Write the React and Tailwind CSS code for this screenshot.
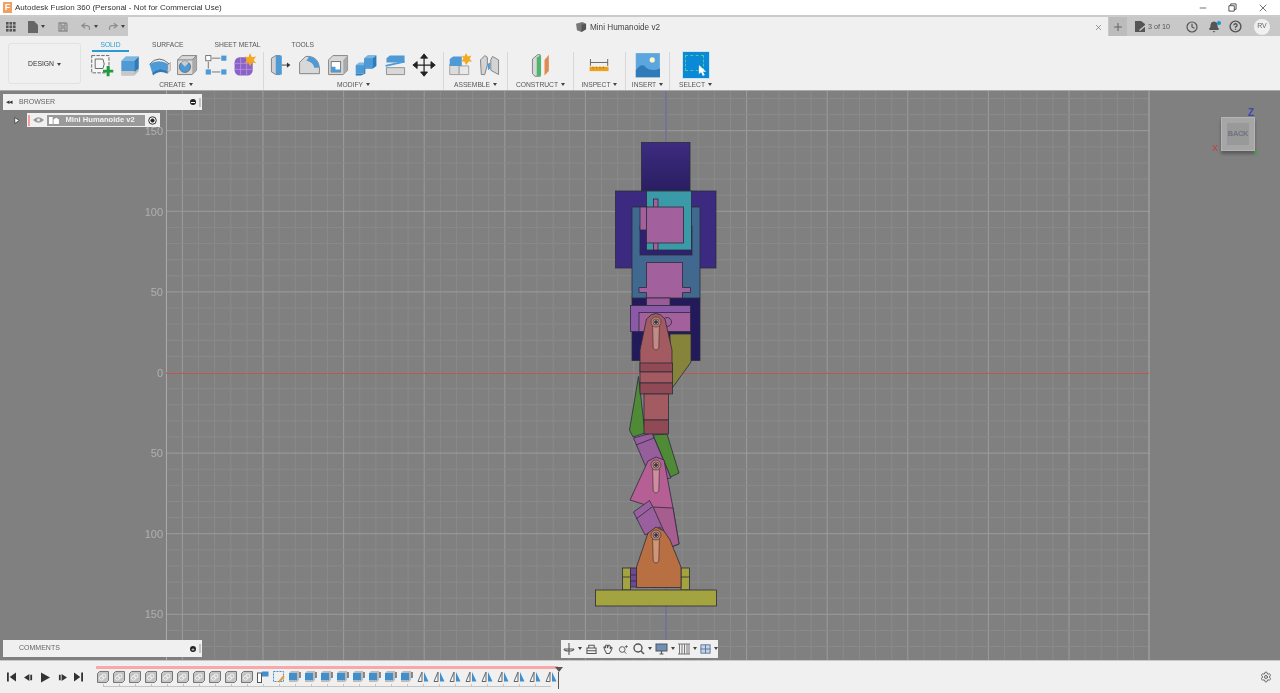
import React from "react";
import { Minus, X, Plus, Clock, Bell, HelpCircle, Settings } from "lucide-react";

const centerX = 666;
const centerY = 372.5;
const step = 16.12;

// grid lines, every fifth one is a major line
const steps = Array.from({ length: 71 }, (_, i) => i - 35);

function Caret() {
  return <span className="inline-block ml-[3px] mb-[1px] border-x-[2.5px] border-t-[3px] border-x-transparent border-t-[#444]" />;
}

function Horn({ x, y }) {
  return (
    <g stroke="#4b3030" strokeWidth="0.7">
      <path d={`M${x - 3.5} ${y} L${x - 2.8} ${y + 26} Q${x} ${y + 30} ${x + 2.8} ${y + 26} L${x + 3.5} ${y}Z`} fill="#ecc8b8" fillOpacity="0.45" />
      <circle cx={x} cy={y} r="5" fill="#b58a80" />
      <circle cx={x} cy={y} r="3" fill="#b9a0a0" />
      <circle cx={x} cy={y} r="1.5" fill="#3a3050" />
    </g>
  );
}

function Robot() {
  const line = { stroke: "#2b2b3a", strokeWidth: 0.8 };
  return (
    <g {...line}>
      {/* head and arms */}
      <rect x="641.5" y="142.5" width="48.5" height="48" fill="url(#head)" />
      <rect x="615.5" y="191" width="100.5" height="77" fill="#3b2a80" />
      {/* hips */}
      <rect x="632" y="298" width="68" height="62.5" fill="#231a5c" />
      {/* torso */}
      <rect x="632" y="207" width="68" height="91" fill="#41688f" />
      <rect x="640" y="226" width="52" height="29" fill="#2d2170" />
      <rect x="646.5" y="191" width="45" height="59" fill="#3b9aa8" />
      <rect x="640" y="207" width="7" height="23" fill="#a2609c" />
      <rect x="653.5" y="199" width="4.5" height="51" fill="#a2609c" />
      <rect x="646.5" y="207" width="37" height="36" fill="#a2609c" />
      <path d="M646.5 262.5H682.5V287.5H690.5V292.5H682.5V298H646.5V292.5H639V287.5H646.5Z" fill="#a2609c" />
      <rect x="646.5" y="298" width="23.5" height="8" fill="#9a5c98" />
      <rect x="630.5" y="305.5" width="60" height="26" fill="#8a5aa8" />
      <rect x="639" y="312.5" width="51.5" height="19" fill="#a2609c" />
      <circle cx="667" cy="322" r="4.5" fill="none" />
      {/* right thigh and left shin */}
      <path d="M670 334H691V362L673 387H670Z" fill="#86843a" />
      <path d="M638.5 376.5L645 433L633 437L629.5 430Z" fill="#4f8a36" />
      <path d="M653 435L667 434L679 473L670.5 477Z" fill="#4f8a36" />
      {/* knee link */}
      <path d="M633.5 438L652 433L671 478L661 480L648 472Z" fill="#965f9c" />
      <path d="M636 445L654 438" fill="none" />
      {/* thigh */}
      <path d="M640 372V350L646.5 319Q656 308 665 319L672 350V372Z" fill="#a35a60" />
      <rect x="640" y="363" width="32.5" height="9" fill="#8f4a55" />
      <rect x="640" y="372" width="32.5" height="11" fill="#a35a60" />
      <rect x="640" y="383" width="32.5" height="11" fill="#8f4a55" />
      <rect x="644" y="394" width="24.5" height="26" fill="#a35a60" />
      <rect x="644" y="420" width="24.5" height="14" fill="#8f4a55" />
      {/* lower leg */}
      <path d="M630 500L648 461L656 457L664 460L673 508L679 544L671 547L652 507Z" fill="#b55f94" />
      <path d="M652 507L673 508L679 544L671 547Z" fill="#a85d90" />
      <path d="M633.5 512L649.5 500.5L654 509L671 547L660 527L645 535Z" fill="#9a5f9e" />
      <path d="M636 519L652 507" fill="none" />
      {/* foot */}
      <rect x="630.5" y="568" width="6.5" height="19" fill="#6d4a90" />
      <rect x="622.5" y="568" width="8" height="22" fill="#a3a340" />
      <rect x="681" y="568" width="8.5" height="22" fill="#a3a340" />
      <path d="M622.5 577H630.5M681 577H689.5M630.5 575H637M630.5 581H637" fill="none" />
      <path d="M636.5 567L648 533L656 527L664 531L670 540L681 567V587.5H636.5Z" fill="#b86f42" />
      <rect x="595.5" y="590" width="121" height="16" fill="#a3a340" />
      <Horn x={656} y={322} />
      <Horn x={656} y={465} />
      <Horn x={656} y={535} />
    </g>
  );
}

function Viewport() {
  const labels = [
    ["150", 131],
    ["100", 212],
    ["50", 292],
    ["0", 373],
    ["50", 453],
    ["100", 534],
    ["150", 614],
  ];
  return (
    <svg viewBox="0 91 1280 569" className="block w-full h-full">
      <defs>
        <linearGradient id="head" x1="0" y1="0" x2="0" y2="1">
          <stop offset="0" stopColor="#3d2c80" />
          <stop offset="1" stopColor="#2a1e62" />
        </linearGradient>
      </defs>
      {steps.map((k) => {
        const x = centerX + k * step;
        if (x < 166 || x > 1149) return null;
        return <line key={"v" + k} x1={x} x2={x} y1="91" y2="660" stroke={k % 5 === 0 ? "#9c9c9c" : "#8a8a8a"} strokeWidth="1" />;
      })}
      {steps.map((k) => {
        const y = centerY + k * step;
        if (y < 91 || y > 660) return null;
        return <line key={"h" + k} x1="166" x2="1149" y1={y} y2={y} stroke={k % 5 === 0 ? "#9c9c9c" : "#8a8a8a"} strokeWidth="1" />;
      })}
      <line x1="166.5" x2="166.5" y1="91" y2="660" stroke="#aaaaaa" />
      <line x1="1149" x2="1149" y1="91" y2="660" stroke="#aaaaaa" />
      <line x1="166" x2="1149" y1={centerY + 0.5} y2={centerY + 0.5} stroke="#b04a4a" />
      <line x1={centerX} x2={centerX} y1="91" y2="660" stroke="#5a5a9c" />
      {labels.map(([t, y]) => (
        <text key={y} x="163" y={y + 4} textAnchor="end" fontSize="11" fill="#b0b0b0" fontFamily="Liberation Sans, sans-serif">
          {t}
        </text>
      ))}
      <Robot />
    </svg>
  );
}

// ribbon icons, 28x28 box
const ribbonIcons = {
  sketch: (
    <g>
      <rect x="2" y="3" width="20" height="20" fill="#f7f7f7" stroke="#555" strokeDasharray="4 1.5" />
      <path d="M6 7H15Q18 13 15 18H6Z" fill="none" stroke="#555" />
      <path d="M21 15V27M15 21H27" stroke="#1f9d3e" strokeWidth="3.4" />
    </g>
  ),
  extrude: (
    <g>
      <path d="M4 9L9 4H24V21L19 26H4Z" fill="#bbb" />
      <path d="M4 9H19V21H4Z" fill="#4e9ad6" />
      <path d="M19 9L24 4V18L19 22Z" fill="#2f7ab8" />
      <path d="M9 4H24L19 9H4Z" fill="#7ab8e4" />
      <path d="M4 21H19V26H4Z" fill="#c8c8c8" />
    </g>
  ),
  revolve: (
    <g>
      <path d="M3 13Q14 1 26 13" fill="none" stroke="#555" />
      <path d="M3 13Q14 6 25 13L24 21Q14 15 6 23Z" fill="#4e9ad6" />
      <path d="M6 23Q14 15 24 21V24Q14 19 7 26Z" fill="#2f7ab8" />
      <path d="M24 14L27 11V20L24 23Z" fill="#ddd" stroke="#777" strokeWidth="0.6" />
    </g>
  ),
  hole: (
    <g>
      <path d="M3 8L8 3H25V20L20 25H3Z" fill="#d8d8d8" stroke="#777" />
      <path d="M20 8L25 3V20L20 25Z" fill="#aaa" />
      <path d="M3 8H20L25 3" fill="none" stroke="#777" />
      <circle cx="11.5" cy="16" r="6.5" fill="#4e9ad6" stroke="#666" />
      <path d="M11.5 16L7 11A6.5 6.5 0 0 1 16 11Z" fill="#ccc" />
    </g>
  ),
  pattern: (
    <g>
      <rect x="2" y="3" width="6" height="6" fill="#fff" stroke="#666" />
      <rect x="20" y="3" width="6" height="6" fill="#4e9ad6" />
      <rect x="2" y="19" width="6" height="6" fill="#4e9ad6" />
      <rect x="20" y="19" width="6" height="6" fill="#4e9ad6" />
      <path d="M9 6H19M5 10V18M9 22H19" stroke="#666" />
    </g>
  ),
  form: (
    <g>
      <rect x="3" y="5" width="21" height="21" rx="6" fill="#8a62c8" />
      <path d="M3 12H24M3 19H24M10 5V26M17 5V26" stroke="#b094dc" />
      <path d="M21 0L23 5L28 4L25 8L28 12L23 11L21 16L19 11L15 12L17 8L15 4L19 5Z" fill="#f5a81c" />
    </g>
  ),
  press: (
    <g>
      <path d="M4 6L9 3H14V25H9L4 22Z" fill="#d0d0d0" stroke="#777" />
      <path d="M9 3H16V25H9Z" fill="#4e9ad6" />
      <path d="M16 14H23" stroke="#333" />
      <path d="M22 11L26 14L22 17Z" fill="#333" />
    </g>
  ),
  fillet: (
    <g>
      <path d="M3 24V11L10 4H15Q25 6 26 17V24Z" fill="#d8d8d8" stroke="#777" />
      <path d="M14 4Q25 6 26 17L20 17Q19 11 11 9Z" fill="#4e9ad6" />
    </g>
  ),
  shell: (
    <g>
      <path d="M3 8L8 3H25V20L20 25H3Z" fill="#d8d8d8" stroke="#777" />
      <path d="M20 8L25 3V20L20 25Z" fill="#aaa" />
      <rect x="6" y="10" width="11" height="12" fill="#fff" stroke="#666" />
      <path d="M6 22V16H11V19H17V22Z" fill="#4e9ad6" />
    </g>
  ),
  combine: (
    <g>
      <path d="M2 14H13V24H2Z" fill="#4e9ad6" />
      <path d="M2 14L6 11H13L13 14Z" fill="#7ab8e4" />
      <path d="M12 6L16 3H26V15L22 18H13V24L8 26H2V24H12Z" fill="#2f7ab8" />
      <path d="M12 6H22V18H12Z" fill="#4e9ad6" />
      <path d="M12 6L16 3H26L22 6Z" fill="#7ab8e4" />
    </g>
  ),
  split: (
    <g>
      <path d="M4 6L8 3H25V11H4Z" fill="#4e9ad6" />
      <path d="M3 15L25 10" stroke="#4e9ad6" strokeWidth="2" />
      <path d="M4 17H25V25H4Z" fill="#d8d8d8" stroke="#888" />
    </g>
  ),
  move: (
    <g fill="#222" stroke="#222">
      <path d="M14 5V23M5 14H23" strokeWidth="1.4" />
      <path d="M14 1L18 6H10ZM14 27L18 22H10ZM1 14L6 10V18ZM27 14L22 10V18Z" />
    </g>
  ),
  component: (
    <g>
      <path d="M2 13H13V25H2Z" fill="#dcdcdc" stroke="#999" />
      <path d="M13 15H24V25H13Z" fill="#e8e8e8" stroke="#999" />
      <path d="M2 7L6 4H16V15H2Z" fill="#4e9ad6" />
      <path d="M21 0L23 4L27 3L25 7L28 10L24 10L21 14L19 10L15 10L18 7L16 3L19 4Z" fill="#f5a81c" />
    </g>
  ),
  joint: (
    <g fill="#d4d4d4" stroke="#777">
      <path d="M4 8L9 3L12 5V14L9 25H5Z" />
      <path d="M25 8L18 4L16 8V20L25 25Z" />
      <path d="M12 13L15 11V18L13 20Z" fill="#4e9ad6" stroke="none" />
    </g>
  ),
  plane: (
    <g>
      <path d="M4 7L10 2H13V27H7L4 24Z" fill="#d8d8d8" stroke="#777" />
      <path d="M9 5L14 3V26L9 27Z" fill="#4fb56d" />
      <path d="M18 8L23 2V21L18 26Z" fill="#e08a52" />
    </g>
  ),
  measure: (
    <g>
      <path d="M4 7V15M24 7V15M4 11H24" stroke="#555" />
      <rect x="3" y="16" width="22" height="5" fill="#eda11c" />
      <path d="M7 16V18M11 16V18M15 16V18M19 16V18" stroke="#a87000" />
    </g>
  ),
  insert: (
    <g>
      <rect x="1" y="0" width="28" height="28" fill="#5ba6de" stroke="#bcd" strokeWidth="0.5" />
      <path d="M1 28V20Q8 10 13 17Q19 22 29 18V28Z" fill="#2f7ab8" />
      <circle cx="20" cy="8" r="3" fill="#fff4c8" />
    </g>
  ),
};

function RibbonGroup({ label, width, icons, gap, last, pl, pr }) {
  return (
    <div className={`flex flex-col items-center shrink-0 h-full ${last ? "" : "border-r border-[#d8d8d8]"}`} style={{ width }}>
      <div className="flex items-center h-[30px]" style={{ gap, paddingLeft: pl, paddingRight: pr }}>
        {icons.map((name) => (
          <svg key={name} viewBox="0 0 29 29" className="w-[25px] h-[25px] shrink-0">
            {ribbonIcons[name]}
          </svg>
        ))}
      </div>
      <div className="text-[6.7px] leading-[10px] text-[#555] mt-[2px] whitespace-nowrap">
        {label}
        <Caret />
      </div>
    </div>
  );
}

function SelectButton() {
  return (
    <div className="relative w-[26px] h-[26px] bg-[#0a8ad6] outline outline-1 outline-[#cfe4f2]">
      <div className="absolute left-[2px] top-[3px] w-[19px] h-[16px] border border-dashed border-[#4fc59a]" />
      <svg viewBox="0 0 10 14" className="absolute left-[15px] top-[12px] w-[9px] h-[13px]">
        <path d="M1 1V11L3.5 9L5.5 13L7.5 12L5.5 8.5H9Z" fill="#fff" />
      </svg>
    </div>
  );
}

function TitleBar() {
  return (
    <div className="flex items-center h-[15px] bg-white shrink-0">
      <div className="ml-[3px] w-[9px] h-[11px] bg-[#f0a060] text-[9px] leading-[11px] font-bold text-white text-center">F</div>
      <span className="ml-[3px] text-[8px] text-[#333]">Autodesk Fusion 360 (Personal - Not for Commercial Use)</span>
      <div className="ml-auto flex items-center gap-[20px] pr-[11px] text-[#555]">
        <Minus size={10} />
        <svg viewBox="0 0 10 10" className="w-[9px] h-[9px]" fill="none" stroke="#444">
          <path d="M1 3H7V9H1ZM3 3V1H9V7H7" />
        </svg>
        <X size={12} strokeWidth={1.4} className="text-[#333]" />
      </div>
    </div>
  );
}

function TabStrip() {
  return (
    <div className="flex h-[21px] bg-[#c8c8c8] border-t-2 border-[#cbcbcb] shrink-0">
      <div className="w-[128px] flex items-center pl-[6px] text-[#666]">
        <svg viewBox="0 0 10 10" className="w-[10px] h-[10px]" fill="#555">
          {[0, 3.5, 7].map((x) => [0, 3.5, 7].map((y) => <rect key={`${x}-${y}`} x={x} y={y} width="2.6" height="2.6" />))}
        </svg>
        <div className="flex items-center ml-[12px]">
          <svg viewBox="0 0 10 12" className="w-[10px] h-[12px]" fill="#666">
            <path d="M0 0H6L10 4V12H0Z" />
          </svg>
          <Caret />
        </div>
        <svg viewBox="0 0 10 10" className="w-[10px] h-[10px] ml-[13px]" fill="none" stroke="#8c8c8c" strokeWidth="1.3">
          <path d="M1 1H8L9 2V9H1ZM3 1V4H7V1M3 9V6H7V9" />
        </svg>
        <div className="flex items-center ml-[13px]">
          <svg viewBox="0 0 12 10" className="w-[10px] h-[9px]" fill="none" stroke="#8c8c8c" strokeWidth="1.4">
            <path d="M5 1L1 4L5 7M1 4H8Q11 5 10 9" />
          </svg>
          <Caret />
        </div>
        <div className="flex items-center ml-[10px]">
          <svg viewBox="0 0 12 10" className="w-[10px] h-[9px]" fill="none" stroke="#8c8c8c" strokeWidth="1.4">
            <path d="M7 1L11 4L7 7M11 4H4Q1 5 2 9" />
          </svg>
          <Caret />
        </div>
      </div>
      <div className="flex-1 relative flex items-center justify-center bg-[#f0f0f0]">
        <svg viewBox="0 0 12 11" className="w-[11px] h-[10px] mr-[3px]">
          <path d="M0 2L7 0L11 2V8L6 11L1 9Z" fill="#777" />
          <path d="M6 3L11 2V8L6 11Z" fill="#555" />
        </svg>
        <span className="mt-[3px] text-[8.2px] text-[#444]">Mini Humanoide v2</span>
        <X size={9} strokeWidth={1.5} className="absolute right-[5px] top-[6px] text-[#555]" />
      </div>
      <div className="w-[172px] flex items-center text-[#555]">
        <div className="ml-[1px] w-[18px] h-full flex items-center justify-center bg-[#bcbcbc]">
          <Plus size={12} strokeWidth={2.2} className="text-[#666]" />
        </div>
        <svg viewBox="0 0 11 11" className="ml-[8px] w-[11px] h-[11px]" fill="#555">
          <path d="M0 0H6L10 3V11H0Z" />
          <path d="M4 9L10 4L11 5L5 10Z" fill="#c8c8c8" />
        </svg>
        <span className="ml-[2px] mt-[1px] w-[22px] text-[7.2px] whitespace-nowrap text-[#555]">3 of 10</span>
        <Clock size={12} strokeWidth={2.4} className="ml-[16px]" />
        <div className="relative ml-[10px]">
          <Bell size={12} fill="#555" />
          <span className="absolute right-[-1px] top-0 w-[4px] h-[4px] rounded-full bg-[#0a96e0]" />
        </div>
        <HelpCircle size={13} strokeWidth={2.6} className="ml-[9px]" />
        <div className="ml-[12px] w-[16px] h-[16px] rounded-full bg-[#f0f0f0] flex items-center justify-center text-[7px] text-[#666]">RV</div>
      </div>
    </div>
  );
}

function Ribbon() {
  return (
    <div className="flex h-[55px] bg-[#f0f0f0] border-b border-[#a8a8a8] shrink-0 pl-[8px]">
      <div className="w-[73px] h-[41px] mt-[7px] pt-[2px] border border-[#e2e2e2] rounded-[3px] flex items-center justify-center text-[6.8px] text-[#333] shrink-0">
        DESIGN
        <Caret />
      </div>
      <div className="flex flex-col ml-[8px]">
        <div className="flex h-[16px] pt-[1px] text-[6.7px] leading-[15px] text-[#555] box-content">
          <div className="w-[37px] h-[15px] ml-[3px] text-center text-[#2a9ad6] border-b-2 border-[#2a9ad6]">SOLID</div>
          <div className="ml-[23px]">SURFACE</div>
          <div className="ml-[31px]">SHEET METAL</div>
          <div className="ml-[31px]">TOOLS</div>
        </div>
        <div className="flex h-[38px]">
          <RibbonGroup label="CREATE" width={175} gap={3.5} pr={5} icons={["sketch", "extrude", "revolve", "hole", "pattern", "form"]} />
          <RibbonGroup label="MODIFY" width={180} gap={3.7} pr={2} icons={["press", "fillet", "shell", "combine", "split", "move"]} />
          <RibbonGroup label="ASSEMBLE" width={64} gap={4} pr={2} icons={["component", "joint"]} />
          <RibbonGroup label="CONSTRUCT" width={66} pl={2} icons={["plane"]} />
          <RibbonGroup label="INSPECT" width={52} icons={["measure"]} />
          <RibbonGroup label="INSERT" width={44} icons={["insert"]} />
          <div className="flex flex-col items-center w-[51px] shrink-0">
            <div className="h-[30px] flex items-center">
              <SelectButton />
            </div>
            <div className="text-[6.7px] leading-[10px] text-[#555] mt-[2px]">
              SELECT
              <Caret />
            </div>
          </div>
        </div>
      </div>
    </div>
  );
}

function PanelEnd() {
  return (
    <div className="ml-auto flex items-center gap-[3px] pr-[1px]">
      <span className="w-[6px] h-[6px] rounded-full bg-[#222] flex items-center justify-center">
        <span className="w-[4px] h-[1px] bg-white" />
      </span>
      <span className="w-[2px] h-[9px] bg-[#c4c4c4]" />
    </div>
  );
}

function BrowserPanel() {
  return (
    <div className="absolute left-[3px] top-[3px] w-[199px]">
      <div className="flex items-center h-[16px] bg-[#f0f0f0] pl-[3px]">
        <span className="text-[7px] text-[#333] tracking-[-1px]">◂◂</span>
        <span className="ml-[7px] text-[7px] text-[#666]">BROWSER</span>
        <PanelEnd />
      </div>
      <div className="flex items-center mt-[3px] h-[14px]">
        <svg viewBox="0 0 8 10" className="ml-[11px] w-[6px] h-[9px]">
          <path d="M1 1L7 5L1 9Z" fill="#fff" stroke="#333" />
        </svg>
        <div className="ml-[7px] w-[133px] h-[14px] flex items-center bg-[#f0f0f0]">
          <span className="ml-[1px] w-[1.5px] h-[11px] bg-[#f4a0a0]" />
          <svg viewBox="0 0 12 8" className="ml-[3px] w-[11px] h-[8px]" fill="#999">
            <path d="M0 4Q6 -2 12 4Q6 10 0 4Z" />
            <circle cx="6" cy="4" r="1.6" fill="#eee" />
          </svg>
          <div className="ml-[3px] flex-1 h-[11px] flex items-center bg-[#9a9a9a] pl-[2px]">
            <svg viewBox="0 0 11 10" className="w-[10px] h-[9px]" fill="#fff">
              <path d="M0 1H4V9H0ZM5 4L8 2L11 4V9H5Z" />
            </svg>
            <span className="ml-[7px] text-[7.6px] font-bold text-[#f4f4f4] whitespace-nowrap">Mini Humanoide v2</span>
          </div>
          <svg viewBox="0 0 10 10" className="mx-[3px] w-[9px] h-[9px]" fill="none" stroke="#222">
            <circle cx="5" cy="5" r="4.2" />
            <circle cx="5" cy="5" r="1.8" fill="#222" />
          </svg>
        </div>
      </div>
    </div>
  );
}

function CommentsPanel() {
  return (
    <div className="absolute left-[3px] bottom-[3px] w-[199px] h-[17px] flex items-center bg-[#f0f0f0] pl-[16px]">
      <span className="text-[7px] text-[#666]">COMMENTS</span>
      <div className="ml-auto flex items-center gap-[3px] pr-[1px]">
        <span className="w-[6px] h-[6px] rounded-full bg-[#222] flex items-center justify-center text-white text-[6px] leading-[6px]">+</span>
        <span className="w-[2px] h-[9px] bg-[#c4c4c4]" />
      </div>
    </div>
  );
}

function NavBar() {
  const stroke = { fill: "none", stroke: "#555", strokeWidth: 1.1 };
  return (
    <div className="absolute left-[561px] bottom-[2px] w-[157px] h-[18px] flex items-center gap-[3px] pl-[2px] bg-[#f0f0f0]">
      <div className="flex items-center">
        <svg viewBox="0 0 12 12" className="w-[12px] h-[12px]" {...stroke}>
          <path d="M6 0V12M1 6H11M1 6A5 2 0 0 0 11 6" />
        </svg>
        <Caret />
      </div>
      <svg viewBox="0 0 12 12" className="w-[12px] h-[12px] ml-[1px]" {...stroke}>
        <path d="M1 5H11V11H1ZM1 8H11M3 5V2H9V5" />
      </svg>
      <svg viewBox="0 0 12 12" className="w-[12px] h-[12px] ml-[2px]" {...stroke}>
        <path d="M3 7L2 4Q3 3 4 5L4 2Q5 1 6 2V5L7 2Q8 1 9 3V6L10 4Q12 4 10 8L8 11H5Z" />
      </svg>
      <svg viewBox="0 0 12 12" className="w-[11px] h-[11px] ml-[2px]" {...stroke}>
        <circle cx="5" cy="6" r="3.4" />
        <path d="M7.5 8.5L10 11M10 1V4M8.5 2.5H11.5" />
      </svg>
      <div className="flex items-center ml-[2px]">
        <svg viewBox="0 0 12 12" className="w-[12px] h-[12px]" {...stroke} strokeWidth={1.4}>
          <circle cx="5" cy="5" r="4" />
          <path d="M8 8L11 11" />
        </svg>
        <Caret />
      </div>
      <div className="flex items-center">
        <svg viewBox="0 0 12 12" className="w-[13px] h-[12px]">
          <rect x="0.5" y="1" width="11" height="7" fill="#6d8fb8" stroke="#555" />
          <path d="M4 11H8M6 8V11" stroke="#555" strokeWidth="1.2" />
        </svg>
        <Caret />
      </div>
      <div className="flex items-center">
        <svg viewBox="0 0 12 12" className="w-[12px] h-[12px]" fill="none" stroke="#777">
          <path d="M1.5 1V11M4 1V11M6.5 1V11M9 1V11M11 1V11M0 1H12M0 11H12" />
        </svg>
        <Caret />
      </div>
      <div className="flex items-center">
        <svg viewBox="0 0 12 12" className="w-[11px] h-[10px]">
          <rect x="0.5" y="1" width="11" height="10" fill="#c8d4e4" stroke="#4a6a96" />
          <path d="M6 1V11M0 6H12" stroke="#4a6a96" />
        </svg>
        <Caret />
      </div>
    </div>
  );
}

function ViewCube() {
  return (
    <div className="absolute left-[1212px] top-[16px] w-[50px] h-[50px]">
      <div className="absolute left-[9px] top-[10px] w-[34px] h-[34px] bg-[#a6a6a6] border border-[#b4b4b4] flex items-center justify-center shadow-[0_3px_3px_#5c5c5c]">
        <div className="w-[22px] h-[22px] bg-[#999] flex items-center justify-center text-[7.5px] font-bold tracking-[-0.3px] text-[#6f7280]">BACK</div>
      </div>
      <span className="absolute left-[36px] top-[-2px] text-[10px] font-bold text-[#3f46b0]">Z</span>
      <span className="absolute left-[0px] top-[35px] text-[9px] text-[#c23c3c]">X</span>
      <span className="absolute left-[42px] top-[41px] text-[8px] font-bold text-[#3aa845]">Y</span>
    </div>
  );
}

function TimelineIcon({ kind }) {
  if (kind === "chain") {
    return (
      <svg viewBox="0 0 12 12" className="w-[12px] h-[12px] shrink-0">
        <path d="M0.5 2.5L2.5 0.5H11.5V9.5L9.5 11.5H0.5Z" fill="#c4c4c4" stroke="#777" />
        <circle cx="4.5" cy="7" r="2" fill="none" stroke="#f4f4f4" />
        <circle cx="7" cy="5" r="2" fill="none" stroke="#f4f4f4" />
      </svg>
    );
  }
  if (kind === "form") {
    return (
      <svg viewBox="0 0 12 12" className="w-[12px] h-[12px] shrink-0">
        <rect x="0.5" y="2" width="4" height="9.5" fill="#fff" stroke="#555" />
        <rect x="5" y="0.5" width="6.5" height="5" fill="#3f8fd0" />
      </svg>
    );
  }
  if (kind === "sketch") {
    return (
      <svg viewBox="0 0 12 12" className="w-[12px] h-[12px] shrink-0">
        <rect x="0.5" y="0.5" width="10" height="10" fill="none" stroke="#3f8fd0" strokeDasharray="2 1" />
        <path d="M6 11L11 5" stroke="#e89a3c" strokeWidth="2" />
      </svg>
    );
  }
  if (kind === "box") {
    return (
      <svg viewBox="0 0 12 12" className="w-[12px] h-[12px] shrink-0">
        <path d="M0 2L2 0H10V9L8 11H0Z" fill="#bbb" />
        <path d="M0 2H8V9H0Z" fill="#3f8fd0" />
        <path d="M10 1H12V7H10Z" fill="#888" />
      </svg>
    );
  }
  return (
    <svg viewBox="0 0 12 12" className="w-[12px] h-[12px] shrink-0">
      <path d="M5 1L1 10.5H5Z" fill="#f4f4f4" stroke="#666" />
      <path d="M7 1L11.5 10.5H7Z" fill="#3f8fd0" />
    </svg>
  );
}

function Timeline() {
  const items = [
    ...Array(10).fill("chain"),
    "form",
    "sketch",
    ...Array(8).fill("box"),
    ...Array(9).fill("tri"),
  ];
  return (
    <div className="relative flex items-center h-[33px] border-t border-[#c8c8c8] bg-[#f0f0f0] shrink-0">
      <div className="flex items-center gap-[7.5px] ml-[7px] w-[89px] shrink-0">
        <svg viewBox="0 0 10 10" className="w-[9px] h-[10px]" fill="#333"><path d="M0 0H2V10H0ZM10 0V10L3 5Z" /></svg>
        <svg viewBox="0 0 10 10" className="w-[9px] h-[9px]" fill="#333"><path d="M6 1V9L0 5ZM7 2H9V8H7Z" /></svg>
        <svg viewBox="0 0 10 10" className="w-[10px] h-[11px]" fill="#333"><path d="M1 0L10 5L1 10Z" /></svg>
        <svg viewBox="0 0 10 10" className="w-[9px] h-[9px]" fill="#333"><path d="M4 1V9L10 5ZM1 2H3V8H1Z" /></svg>
        <svg viewBox="0 0 10 10" className="w-[9px] h-[10px]" fill="#333"><path d="M10 0H8V10H10ZM0 0V10L7 5Z" /></svg>
      </div>
      <div className="flex flex-col -mt-[2px]">
        <div className="w-[462px] h-[3px] bg-[#f7a9a9] mb-[2px]" />
        <div className="flex gap-[4px] ml-[1px]">
          {items.map((kind, i) => (
            <TimelineIcon key={i} kind={kind} />
          ))}
        </div>
        {/* small ticks under the features */}
        <div className="flex gap-[15px] ml-[7px] mt-[1px] w-[448px] h-[3px] border-b border-[#c4c4c4]">
          {items.slice(0, 28).map((_, i) => (
            <span key={i} className="w-[1px] h-[3px] bg-[#c4c4c4] shrink-0" />
          ))}
        </div>
      </div>
      <div className="absolute left-[554px] top-[6px] flex flex-col items-center w-[9px]">
        <div className="w-0 h-0 border-x-[4px] border-t-[5px] border-x-transparent border-t-[#555]" />
        <div className="w-[1px] h-[17px] bg-[#555]" />
      </div>
      <Settings size={12} className="ml-auto mr-[8px] text-[#666]" />
    </div>
  );
}

export default function App() {
  return (
    <div className="w-full h-screen flex flex-col overflow-hidden bg-[#808080] blur-[0.35px] font-['Liberation_Sans',sans-serif]">
      <TitleBar />
      <TabStrip />
      <Ribbon />
      <div className="relative flex-1 min-h-0">
        <Viewport />
        <BrowserPanel />
        <ViewCube />
        <CommentsPanel />
        <NavBar />
      </div>
      <Timeline />
    </div>
  );
}
